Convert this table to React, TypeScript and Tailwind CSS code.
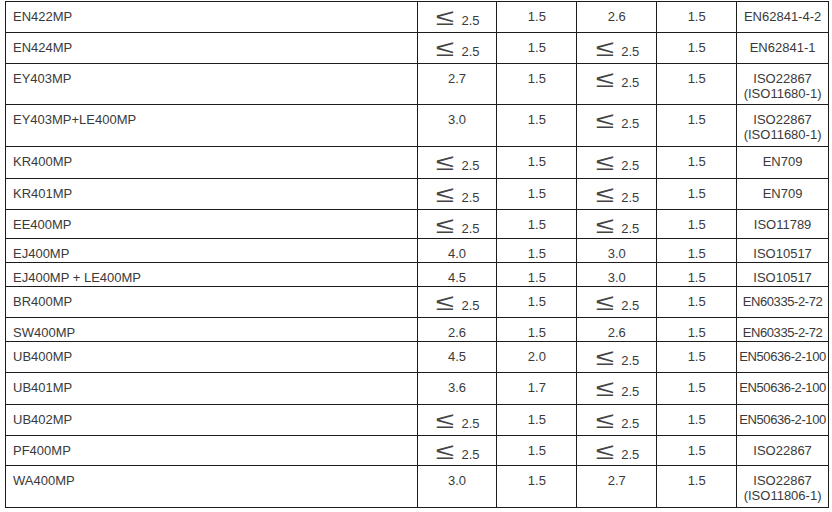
const LE = "LE";

type Row = {
  name: string;
  a: string;
  b: string;
  c: string;
  d: string;
  std: string[];
  h: string;
  tight?: boolean;
};

const rows: Row[] = [
  { name: "EN422MP", a: LE, b: "1.5", c: "2.6", d: "1.5", std: ["EN62841-4-2"], h: "h-[31px]" },
  { name: "EN424MP", a: LE, b: "1.5", c: LE, d: "1.5", std: ["EN62841-1"], h: "h-[31px]" },
  { name: "EY403MP", a: "2.7", b: "1.5", c: LE, d: "1.5", std: ["ISO22867", "(ISO11680-1)"], h: "h-[41px]" },
  { name: "EY403MP+LE400MP", a: "3.0", b: "1.5", c: LE, d: "1.5", std: ["ISO22867", "(ISO11680-1)"], h: "h-[42px]" },
  { name: "KR400MP", a: LE, b: "1.5", c: LE, d: "1.5", std: ["EN709"], h: "h-[32px]" },
  { name: "KR401MP", a: LE, b: "1.5", c: LE, d: "1.5", std: ["EN709"], h: "h-[31px]" },
  { name: "EE400MP", a: LE, b: "1.5", c: LE, d: "1.5", std: ["ISO11789"], h: "h-[29px]" },
  { name: "EJ400MP", a: "4.0", b: "1.5", c: "3.0", d: "1.5", std: ["ISO10517"], h: "h-[24px]" },
  { name: "EJ400MP + LE400MP", a: "4.5", b: "1.5", c: "3.0", d: "1.5", std: ["ISO10517"], h: "h-[24px]" },
  { name: "BR400MP", a: LE, b: "1.5", c: LE, d: "1.5", std: ["EN60335-2-72"], h: "h-[31px]", tight: true },
  { name: "SW400MP", a: "2.6", b: "1.5", c: "2.6", d: "1.5", std: ["EN60335-2-72"], h: "h-[24px]", tight: true },
  { name: "UB400MP", a: "4.5", b: "2.0", c: LE, d: "1.5", std: ["EN50636-2-100"], h: "h-[31px]", tight: true },
  { name: "UB401MP", a: "3.6", b: "1.7", c: LE, d: "1.5", std: ["EN50636-2-100"], h: "h-[32px]", tight: true },
  { name: "UB402MP", a: LE, b: "1.5", c: LE, d: "1.5", std: ["EN50636-2-100"], h: "h-[31px]", tight: true },
  { name: "PF400MP", a: LE, b: "1.5", c: LE, d: "1.5", std: ["ISO22867"], h: "h-[30px]" },
  { name: "WA400MP", a: "3.0", b: "1.5", c: "2.7", d: "1.5", std: ["ISO22867", "(ISO11806-1)"], h: "h-[42px]" },
];

// "≤ 2.5" cells: wide thin ≤ with the value dropped to its baseline
function Value({ v }: { v: string }) {
  if (v === LE) {
    return (
      <div className="flex items-baseline justify-center pt-[4px] pl-[4px] leading-none">
        <span className="inline-block w-[14px] scale-x-[1.45] text-[23px] text-[#444]">≤</span>
        <span className="ml-[9px]">2.5</span>
      </div>
    );
  }
  return <div className="pt-[7px] leading-[15px]">{v}</div>;
}

export default function App() {
  return (
    <div
      className="min-h-[512px] bg-white pt-px pl-[5px] text-[13px] text-[#3a3a3a]"
      style={{ fontFamily: '"Liberation Sans", Arial, sans-serif' }}
    >
      <div className="w-[824px] border-t border-l border-[#1c1c1c]">
        {rows.map((r) => (
          <div key={r.name} className={`flex border-b border-[#1c1c1c] ${r.h}`}>
            <div className="w-[412px] border-r border-[#1c1c1c] pt-[7px] pl-[7px] leading-[15px]">
              {r.name}
            </div>
            <div className="w-[80px] border-r border-[#1c1c1c] text-center">
              <Value v={r.a} />
            </div>
            <div className="w-[80px] border-r border-[#1c1c1c] text-center">
              <Value v={r.b} />
            </div>
            <div className="w-[80px] border-r border-[#1c1c1c] text-center">
              <Value v={r.c} />
            </div>
            <div className="w-[80px] border-r border-[#1c1c1c] text-center">
              <Value v={r.d} />
            </div>
            <div
              className={`w-[92px] border-r border-[#1c1c1c] pt-[7px] text-center leading-[15px] ${
                r.tight ? "tracking-[-0.4px]" : ""
              }`}
            >
              {r.std.map((s) => (
                <div key={s}>{s}</div>
              ))}
            </div>
          </div>
        ))}
      </div>
    </div>
  );
}
